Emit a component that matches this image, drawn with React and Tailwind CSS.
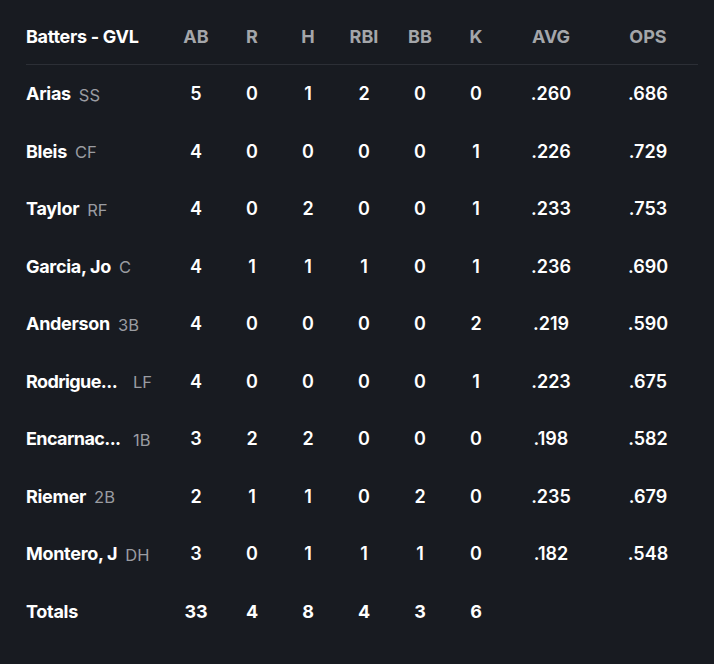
import React from "react";

const rows = [
  ["Arias", "SS", 5, 0, 1, 2, 0, 0, ".260", ".686"],
  ["Bleis", "CF", 4, 0, 0, 0, 0, 1, ".226", ".729"],
  ["Taylor", "RF", 4, 0, 2, 0, 0, 1, ".233", ".753"],
  ["Garcia, Jo", "C", 4, 1, 1, 1, 0, 1, ".236", ".690"],
  ["Anderson", "3B", 4, 0, 0, 0, 0, 2, ".219", ".590"],
  ["Rodrigue...", "LF", 4, 0, 0, 0, 0, 1, ".223", ".675", true],
  ["Encarnac...", "1B", 3, 2, 2, 0, 0, 0, ".198", ".582", true],
  ["Riemer", "2B", 2, 1, 1, 0, 2, 0, ".235", ".679"],
  ["Montero, J", "DH", 3, 0, 1, 1, 1, 0, ".182", ".548"],
];

const grid = "grid grid-cols-[142px_56px_56px_56px_56px_56px_56px_94px_100px] items-center";

export default function App() {
  return (
    <div
      className="w-[714px] h-[664px] bg-[#181b21] pl-[26px] pr-[16px] pt-[8px]"
      style={{ fontFamily: "Inter, 'Open Sans', sans-serif" }}
    >
      <div className={`${grid} h-[57px] border-b border-[#2c2f36] text-[18px] font-bold`}>
        <div className="text-white tracking-[-0.3px] whitespace-nowrap">Batters - GVL</div>
        {["AB", "R", "H", "RBI", "BB", "K", "AVG", "OPS"].map((h) => (
          <div key={h} className="text-center text-[#a4a6aa]">{h}</div>
        ))}
      </div>
      {rows.map((r) => (
        <div key={r[0]} className={`${grid} h-[57.5px] text-[18px]`}>
          <div className="flex items-center whitespace-nowrap">
            <span className={`font-bold text-white ${r[10] ? "min-w-[99px] tracking-[-0.6px]" : "tracking-[-0.3px]"}`}>{r[0]}</span>
            <span className="ml-[8px] mt-[3px] text-[16.5px] text-[#9a9ca1]">{r[1]}</span>
          </div>
          {r.slice(2, 10).map((v, i) => (
            <div key={i} className="text-center text-white font-semibold">{v}</div>
          ))}
        </div>
      ))}
      <div className={`${grid} h-[57.5px] text-[18px] font-bold text-white`}>
        <div className="tracking-[-0.3px]">Totals</div>
        {[33, 4, 8, 4, 3, 6].map((v, i) => (
          <div key={i} className="text-center">{v}</div>
        ))}
        <div />
        <div />
      </div>
    </div>
  );
}
